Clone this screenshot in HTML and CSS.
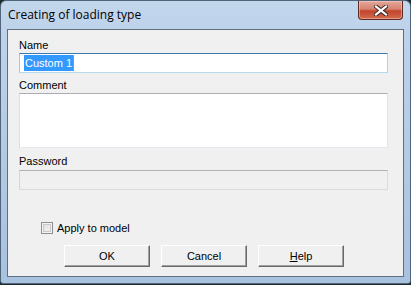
FILE: index.html
```html
<!DOCTYPE html>
<html lang="en">
<head>
    <meta charset="UTF-8">
    <title>Creating of loading type</title>
    <link rel="stylesheet" href="styles.css">
</head>
<body>
    <div class="window">
        <div class="titlebar">
            <span class="title">Creating of loading type</span>
            <button class="close-button">
                <svg width="14" height="11" viewBox="0 0 14 11">
                    <path d="M2 1.5 L12 9.5 M12 1.5 L2 9.5" stroke="#3b2a28" stroke-width="4.2" stroke-linecap="square"/>
                    <path d="M2 1.5 L12 9.5 M12 1.5 L2 9.5" stroke="#ffffff" stroke-width="2.2" stroke-linecap="square"/>
                </svg>
            </button>
        </div>
        <div class="client">
            <label class="field-label">Name</label>
            <div class="text-input focused"><span class="selection">Custom 1</span></div>

            <label class="field-label">Comment</label>
            <div class="text-area"></div>

            <label class="field-label password-label">Password</label>
            <div class="text-input disabled"></div>

            <label class="check-row">
                <span class="check-box"></span>
                <span>Apply to model</span>
            </label>

            <div class="button-row">
                <button class="push-button">OK</button>
                <button class="push-button">Cancel</button>
                <button class="push-button"><u>H</u>elp</button>
            </div>
        </div>
        <div class="bottom-frame"></div>
    </div>
</body>
</html>
```

FILE: styles.css
```css
* {
    margin: 0;
    padding: 0;
    box-sizing: border-box;
}

body {
    width: 411px;
    height: 285px;
    overflow: hidden;
    background-color: #1d2a2e;
    font-family: "Liberation Sans", Arial, sans-serif;
    font-size: 11px;
    color: #000;
}

.window {
    width: 411px;
    height: 284px;
    display: flex;
    flex-direction: column;
    background: linear-gradient(to bottom, #c2d6ec 0px, #bed3ea 30px, #a9c2df 270px);
    border: 1px solid #50647a;
    border-radius: 6px 6px 3px 3px;
}

.titlebar {
    height: 28px;
    flex-shrink: 0;
    display: flex;
    align-items: flex-start;
    justify-content: space-between;
    padding-left: 7px;
    padding-right: 7px;
}

.title {
    font-family: "Open Sans", "Noto Sans", sans-serif;
    font-size: 12px;
    color: #000;
    margin-top: 5px;
}

.close-button {
    width: 45px;
    height: 19px;
    border: 1px solid #5e2a24;
    border-top: none;
    border-radius: 0 0 4px 4px;
    background: linear-gradient(to bottom, #e3a79c 0%, #d5836f 45%, #c2452c 55%, #d26a4c 100%);
    display: flex;
    align-items: center;
    justify-content: center;
    box-shadow: inset 0 0 0 1px rgba(255, 220, 210, 0.45);
}

.client {
    margin: 0 6px;
    height: 248px;
    flex-shrink: 0;
    background-color: #f0f0f0;
    border: 1px solid #5f6f80;
    padding: 8px 13px 0 11px;
    display: flex;
    flex-direction: column;
}

.field-label {
    display: block;
    height: 14px;
    line-height: 14px;
    margin-bottom: 1px;
}

.password-label {
    margin-bottom: 2px;
}

.text-input {
    width: 369px;
    height: 20px;
    flex-shrink: 0;
    background-color: #fff;
    border: 1px solid;
    border-color: #abadb3 #e2e3ea #e3e9ef #dbdfe6;
    padding: 1px 0 0 4px;
    margin-bottom: 5px;
}

.text-input.focused {
    border-color: #3d7bad #b5cfe7 #b7d9ed #a4c9e3;
}

.text-input.disabled {
    background-color: #f0f0f0;
    border-color: #adb2b5 #dadcdf #dadcdf #d5d8da;
}

.selection {
    display: inline-block;
    height: 16px;
    line-height: 16px;
    padding: 0 1px;
    background-color: #3399ff;
    color: #fff;
    border-right: 1px solid #e8811f;
}

.text-area {
    width: 369px;
    height: 55px;
    flex-shrink: 0;
    background-color: #fff;
    border: 1px solid;
    border-color: #abadb3 #e2e3ea #e3e9ef #dbdfe6;
    margin-bottom: 6px;
}

.check-row {
    display: flex;
    align-items: center;
    gap: 4px;
    margin-top: 27px;
    margin-left: 22px;
    height: 12px;
}

.check-box {
    width: 12px;
    height: 12px;
    border: 1px solid #8f8f8f;
    background: linear-gradient(135deg, #dcdcdc, #f6f6f6);
    box-shadow: inset 0 0 0 1px #f4f4f4, inset 0 0 0 2px #c9c9c9;
}

.button-row {
    display: flex;
    gap: 11px;
    margin-top: 11px;
    margin-left: 45px;
}

.push-button {
    width: 86px;
    height: 22px;
    font-family: "Liberation Sans", Arial, sans-serif;
    font-size: 11px;
    color: #000;
    background-color: #f0f0f0;
    border: 1px solid;
    border-color: #ffffff #696969 #696969 #ffffff;
    box-shadow: inset -1px -1px 0 #a0a0a0;
}

.bottom-frame {
    flex: 1;
}
```
